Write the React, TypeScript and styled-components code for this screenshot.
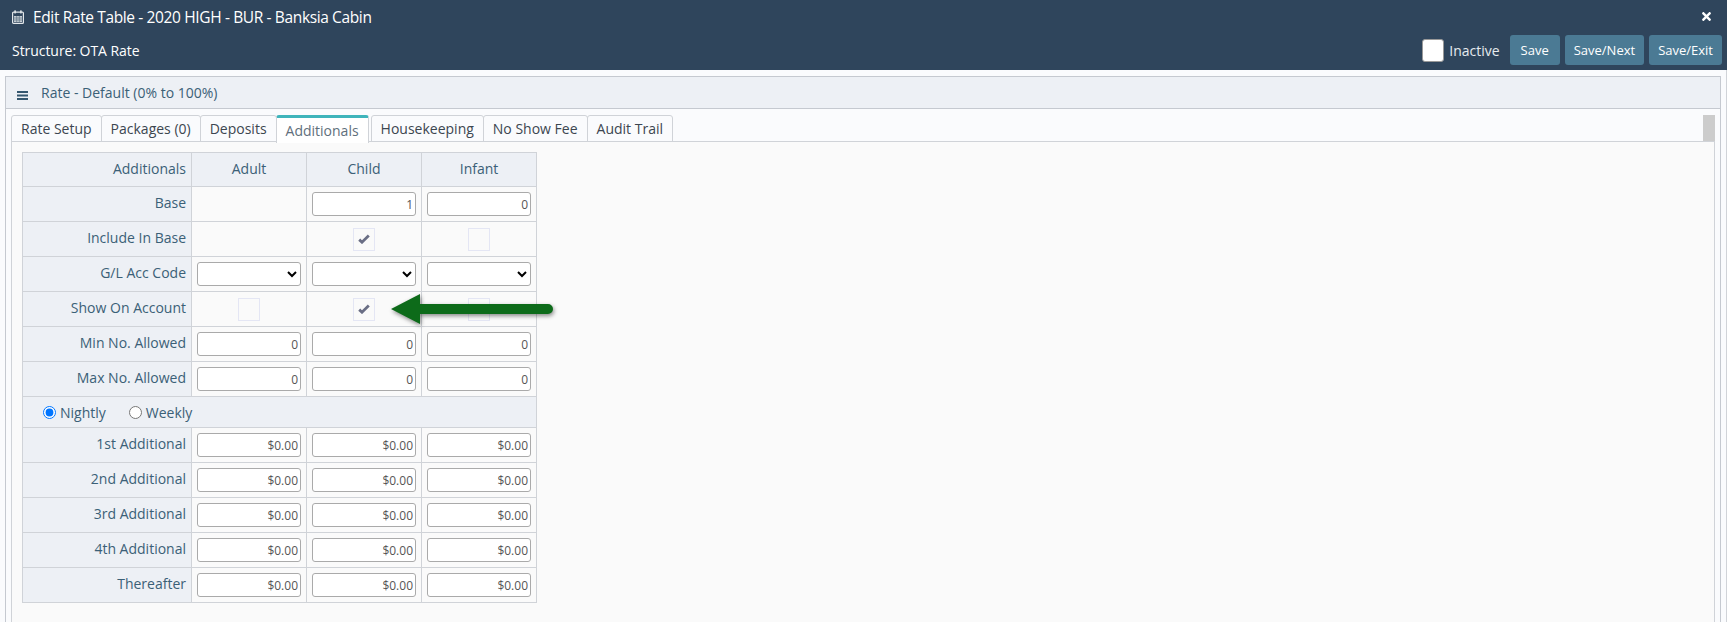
import React from 'react';
import styled, { createGlobalStyle } from 'styled-components';
import { FaTimes } from 'react-icons/fa';

const GlobalStyle = createGlobalStyle`
  html, body {
    margin: 0;
    padding: 0;
    height: 100%;
    background: #fafbfd;
    overflow: hidden;
  }
  body, input, select, button {
    font-family: "Open Sans", "Noto Sans", sans-serif;
  }
`;

const Page = styled.div`
  display: flex;
  flex-direction: column;
  height: 622px;
`;

const Header = styled.header`
  height: 70px;
  flex: none;
  background: #2f455c;
  color: #fff;
  display: flex;
  flex-direction: column;
  padding: 0 5px 0 11px;
  box-sizing: border-box;
`;

const TitleRow = styled.div`
  display: flex;
  align-items: center;
  justify-content: space-between;
  height: 33px;
  font-size: 15.5px;
  letter-spacing: -0.37px;
  padding-right: 9px;
`;

const Title = styled.div`
  display: flex;
  align-items: center;
  gap: 9px;
`;

const CalendarIcon = styled.svg`
  flex: none;
  margin-left: 1px;
`;

const ActionRow = styled.div`
  display: flex;
  align-items: center;
  justify-content: space-between;
  height: 34px;
`;

const Structure = styled.div`
  font-size: 14px;
  font-weight: 500;
  letter-spacing: -0.05px;
  margin: 1px 0 0 1px;
`;

const Actions = styled.div`
  display: flex;
  align-items: center;
  gap: 5px;
`;

const InactiveBox = styled.span`
  width: 22px;
  height: 23px;
  box-sizing: border-box;
  background: #fff;
  border: 1px solid #999;
  border-radius: 3px;
`;

const InactiveLabel = styled.span`
  font-size: 14px;
  margin-right: 5px;
  color: #e6ebef;
`;

const ActionButton = styled.button`
  height: 30px;
  min-width: 50px;
  padding: 0 9px;
  border: 0;
  border-radius: 3px;
  background: #4b7a94;
  color: #fff;
  font-size: 13px;
`;

const Body = styled.div`
  flex: 1;
  display: flex;
  padding: 6px 0 0 5px;
  border-right: 1px solid #d0d3d8;
  min-height: 0;
`;

const Panel = styled.section`
  flex: 1;
  display: flex;
  flex-direction: column;
  margin-right: 5px;
  border: 1px solid #c5c9d0;
  border-bottom: 0;
`;

const PanelHead = styled.div`
  height: 31px;
  flex: none;
  display: flex;
  align-items: center;
  gap: 13px;
  padding-left: 11px;
  background: #edf0f5;
  border-bottom: 1px solid #c5c9d0;
  color: #3b6077;
  font-size: 14px;
`;

const MenuIcon = styled.svg`
  margin-top: 6px;
  flex: none;
`;

const PanelBody = styled.div`
  flex: 1;
  display: flex;
  flex-direction: column;
  padding: 6px 5px 0 5px;
  min-height: 0;
`;

const TabBar = styled.div`
  display: flex;
  height: 27px;
  flex: none;
  position: relative;
`;

const Tab = styled.div<{ $active?: boolean }>`
  box-sizing: border-box;
  height: ${p => (p.$active ? '28px' : '27px')};
  padding: 0 9px;
  display: flex;
  align-items: center;
  font-size: 14px;
  color: ${p => (p.$active ? '#5f6f7c' : '#3c4650')};
  background: ${p => (p.$active ? '#fff' : '#fafbfd')};
  border: 1px solid #d0d3d8;
  border-top: ${p => (p.$active ? '3px solid #3fb4bb' : '1px solid #d0d3d8')};
  border-bottom: ${p => (p.$active ? '0' : '1px solid #d0d3d8')};
  border-radius: 3px 3px 0 0;
  margin-right: ${p => (p.$active ? '2px' : '-1px')};
  z-index: ${p => (p.$active ? 1 : 0)};
`;

const ScrollThumb = styled.div`
  position: absolute;
  right: 0;
  top: 0;
  width: 12px;
  height: 26px;
  background: #ccc;
`;

const TabContent = styled.div`
  flex: 1;
  position: relative;
  background: #fafafa;
  border: 1px solid #d0d3d8;
  border-bottom: 0;
  margin-top: -1px;
  padding: 10px 0 0 10px;
`;

const RateTable = styled.table`
  border-collapse: collapse;
  table-layout: fixed;
  width: 515px;
  font-size: 14px;
  color: #3b6077;
`;

const LabelCell = styled.td`
  width: 169px;
  box-sizing: border-box;
  text-align: right;
  padding: 0 5px 3px 0;
  background: #edf0f5;
  border: 1px solid #d0d3d8;
`;

const ColumnHead = styled.td`
  width: 115px;
  text-align: center;
  background: #edf0f5;
  border: 1px solid #d0d3d8;
  height: 34px;
  padding: 0 0 2px;
  box-sizing: border-box;
`;

const Cell = styled.td`
  width: 115px;
  height: 34px;
  box-sizing: border-box;
  padding: 0 5px;
  text-align: center;
  border: 1px solid #d0d3d8;
`;

const Row = styled.tr`
  height: 35px;
`;

const FreqCell = styled.td`
  height: 31px;
  box-sizing: border-box;
  background: #edf0f5;
  border: 1px solid #d0d3d8;
  padding: 1px 0 0 20px;
`;

const NumberBox = styled.div`
  box-sizing: border-box;
  height: 24px;
  background: #fff;
  border: 1px solid #aaa;
  border-radius: 3px;
  font-size: 12px;
  color: #555;
  display: flex;
  align-items: center;
  justify-content: flex-end;
  padding-right: 2px;
`;

const SelectBox = styled.select`
  display: block;
  box-sizing: border-box;
  width: 100%;
  height: 24px;
  background: #fff;
  border: 1px solid #aaa;
  border-radius: 3px;
`;

const CheckBox = styled.span`
  display: inline-flex;
  align-items: center;
  justify-content: center;
  box-sizing: border-box;
  width: 22px;
  height: 23px;
  vertical-align: middle;
  border: 1px solid #e4e6f4;
  background: #fafafa;
`;

const RadioLabel = styled.label`
  display: inline-flex;
  align-items: center;
  gap: 4px;
  margin-right: 23px;
  input {
    margin: 0;
    width: 13px;
    height: 13px;
  }
`;

const Arrow = styled.svg`
  position: absolute;
  left: 379px;
  top: 152px;
  overflow: visible;
  filter: drop-shadow(1px 2px 2px rgba(0, 0, 0, 0.45));
`;

const rows = ['1st Additional', '2nd Additional', '3rd Additional', '4th Additional', 'Thereafter'];
const limits = ['Min No. Allowed', 'Max No. Allowed'];
const tabs = ['Rate Setup', 'Packages (0)', 'Deposits', 'Additionals', 'Housekeeping', 'No Show Fee', 'Audit Trail'];

const Tick = () => (
  <svg width="12" height="10" viewBox="0 0 12 10">
    <path d="M1.2 5.6 L4 8.2 L10.8 1.6" fill="none" stroke="#6a6e85" strokeWidth="2.8" />
  </svg>
);

const App = () => (
  <Page>
    <GlobalStyle />
    <Header>
      <TitleRow>
        <Title>
          <CalendarIcon width="12" height="14" viewBox="0 0 12 14">
            <rect x="0.6" y="2.1" width="10.8" height="11.3" rx="1" fill="none" stroke="#e3e7ea" strokeWidth="1.2" />
            <rect x="2.3" y="0.4" width="1.6" height="3" fill="#e3e7ea" />
            <rect x="8.1" y="0.4" width="1.6" height="3" fill="#e3e7ea" />
            <path d="M2 6h8v6H2z" fill="#c3cbd2" />
            <path d="M2 8h8M2 10h8M4.7 6v6M7.3 6v6" stroke="#5e7385" strokeWidth="0.7" />
          </CalendarIcon>
          Edit Rate Table - 2020 HIGH - BUR - Banksia Cabin
        </Title>
        <FaTimes size={13} />
      </TitleRow>
      <ActionRow>
        <Structure>Structure: OTA Rate</Structure>
        <Actions>
          <InactiveBox />
          <InactiveLabel>Inactive</InactiveLabel>
          <ActionButton>Save</ActionButton>
          <ActionButton>Save/Next</ActionButton>
          <ActionButton>Save/Exit</ActionButton>
        </Actions>
      </ActionRow>
    </Header>
    <Body>
      <Panel>
        <PanelHead>
          <MenuIcon width="11" height="9" viewBox="0 0 11 9" fill="#34566e">
            <rect y="0" width="11" height="2" />
            <rect y="3.5" width="11" height="2" />
            <rect y="7" width="11" height="2" />
          </MenuIcon>
          Rate - Default (0% to 100%)
        </PanelHead>
        <PanelBody>
          <TabBar>
            {tabs.map(t => (
              <Tab key={t} $active={t === 'Additionals'}>{t}</Tab>
            ))}
            <ScrollThumb />
          </TabBar>
          <TabContent>
            <RateTable>
              <tbody>
                <tr>
                  <LabelCell>Additionals</LabelCell>
                  <ColumnHead>Adult</ColumnHead>
                  <ColumnHead>Child</ColumnHead>
                  <ColumnHead>Infant</ColumnHead>
                </tr>
                <Row>
                  <LabelCell>Base</LabelCell>
                  <Cell />
                  <Cell><NumberBox>1</NumberBox></Cell>
                  <Cell><NumberBox>0</NumberBox></Cell>
                </Row>
                <Row>
                  <LabelCell>Include In Base</LabelCell>
                  <Cell />
                  <Cell><CheckBox><Tick /></CheckBox></Cell>
                  <Cell><CheckBox /></Cell>
                </Row>
                <Row>
                  <LabelCell>G/L Acc Code</LabelCell>
                  <Cell><SelectBox /></Cell>
                  <Cell><SelectBox /></Cell>
                  <Cell><SelectBox /></Cell>
                </Row>
                <Row>
                  <LabelCell>Show On Account</LabelCell>
                  <Cell><CheckBox /></Cell>
                  <Cell><CheckBox><Tick /></CheckBox></Cell>
                  <Cell><CheckBox /></Cell>
                </Row>
                {limits.map(l => (
                  <Row key={l}>
                    <LabelCell>{l}</LabelCell>
                    <Cell><NumberBox>0</NumberBox></Cell>
                    <Cell><NumberBox>0</NumberBox></Cell>
                    <Cell><NumberBox>0</NumberBox></Cell>
                  </Row>
                ))}
                <tr>
                  <FreqCell colSpan={4}>
                    <RadioLabel><input type="radio" name="freq" defaultChecked />Nightly</RadioLabel>
                    <RadioLabel><input type="radio" name="freq" />Weekly</RadioLabel>
                  </FreqCell>
                </tr>
                {rows.map(r => (
                  <Row key={r}>
                    <LabelCell>{r}</LabelCell>
                    <Cell><NumberBox>$0.00</NumberBox></Cell>
                    <Cell><NumberBox>$0.00</NumberBox></Cell>
                    <Cell><NumberBox>$0.00</NumberBox></Cell>
                  </Row>
                ))}
              </tbody>
            </RateTable>
            <Arrow width="163" height="30" viewBox="0 0 163 30">
              <path d="M0 15 L29 0 V10 H157 a5 5 0 0 1 0 10 H29 V30 Z" fill="#0d6b1a" />
            </Arrow>
          </TabContent>
        </PanelBody>
      </Panel>
    </Body>
  </Page>
);

export default App;
